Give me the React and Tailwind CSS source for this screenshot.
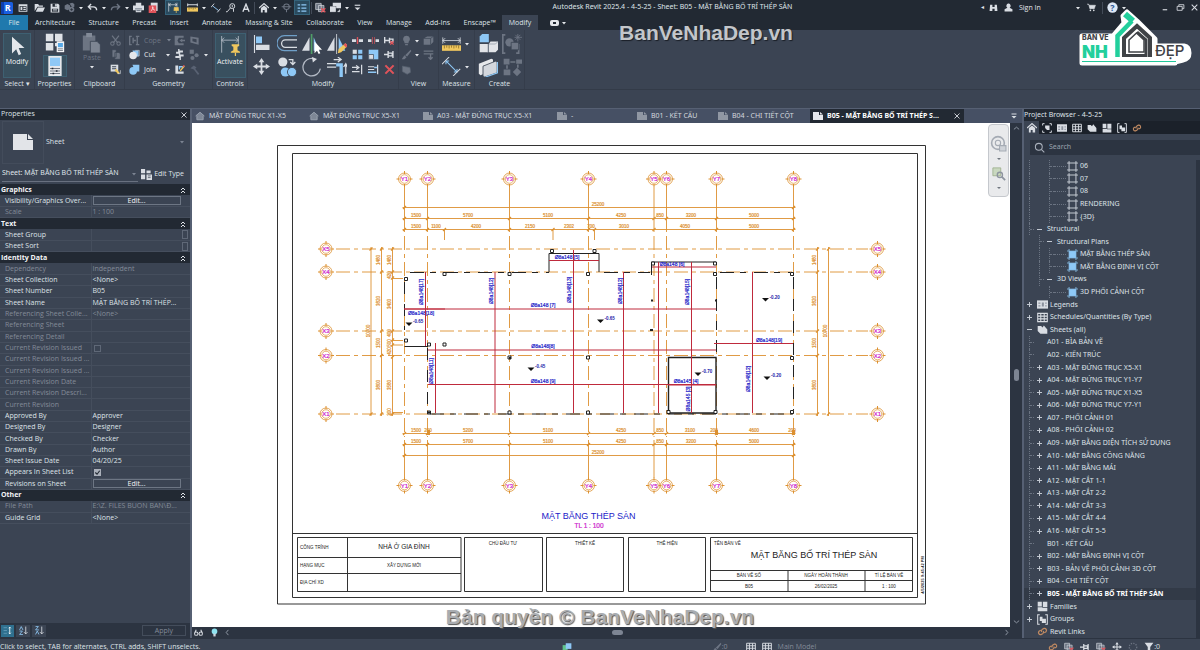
import React, { useState } from 'react';

const LIGHT = '#d9dde3';
const DIM = '#6d7583';
const BLUE = '#8ec8f6';
const GOLD = '#f0c75e';
const RED = '#e0535a';

/* ---------- icons ---------- */

const Svg = ({ size = 12, vb = 16, children }) => (
    <svg width={size} height={size} viewBox={`0 0 ${vb} ${vb}`} fill="none" className="shrink-0">
        {children}
    </svg>
);

const icons = {
    revit: <><rect width="16" height="16" rx="2" fill="#1a5fe0" /><path d="M0 0h4v16H0z" fill="#0d3fae" /><text x="9" y="12.5" fontSize="12" fontWeight="700" fill="#fff" textAnchor="middle" fontFamily="Open Sans">R</text></>,
    homeWin: <><path d="M1 2h14v12H1z" fill={LIGHT} /><path d="M2.500 5h11v7.500h-11z" fill="#222933" /><path d="M4 6h3v5H4zM8.500 6h4v2h-4zM8.500 9h4v2h-4z" fill={LIGHT} /></>,
    open: <><path d="M1 13V3h5l1.500 2H13v2H5z" fill={LIGHT} /><path d="M5.500 8H16l-3 6H2.500z" fill={LIGHT} /></>,
    save: <><path d="M1 1h12l2 2v12H1z" fill={LIGHT} /><path d="M4 1h7v5H4zM3 9h10v5H3z" fill="#222933" /><path d="M8.500 2h2v3h-2zM4.500 10.500h7M4.500 12.500h7" fill={LIGHT} stroke={LIGHT} /></>,
    sync: <><path d="M1 5l4-2 4 2v5l-4 2-4-2zM8 2l4-1 3 2v4l-3 1" fill={DIM} /><circle cx="11" cy="11" r="4" fill={DIM} /><path d="M9 11h4M11 9v4" stroke="#222933" /></>,
    undo: <path d="M2 7h7q5 0 5 5M6 3L2 7l4 4" stroke={LIGHT} strokeWidth="2" />,
    redo: <path d="M14 7H7q-5 0-5 5M10 3l4 4-4 4" stroke={DIM} strokeWidth="2" />,
    print: <><path d="M4 1h8v4H4zM0 5h16v7H0zM4 10h8v5H4z" fill={LIGHT} /><path d="M3 10h10M5 12.500h6" stroke="#3d4b5c" /></>,
    pdf: <><path d="M4 1h10v12H4z" fill={LIGHT} /><path d="M1 5h11v11H1z" fill={RED} /><path d="M4 13c3-2 4-5 3-6s-1 4 3 5" stroke="#fff" /></>,
    activate: <><path d="M1 1v13M13 1v6M1 4h12M4 2L1 4l3 2M10 2l3 2-3 2" stroke={LIGHT} /><path d="M9 8h6v4H9zM8 12h8M12 12v4" fill={GOLD} stroke={GOLD} /></>,
    measure: <><path d="M1 2v4M15 2v4M1 4h14" stroke={LIGHT} strokeWidth="1.500" /><path d="M0 8h16v6H0z" fill={GOLD} /><path d="M3 8v3M6 8v2M9 8v3M12 8v2" stroke="#6b5a2c" /></>,
    dim: <><path d="M3 5l9 7" stroke={BLUE} strokeWidth="1.500" /><path d="M0 7l5-6M10 15l5-6" stroke={LIGHT} strokeWidth="1.500" /></>,
    tag: <><circle cx="10" cy="5" r="4" stroke={LIGHT} strokeWidth="1.500" /><path d="M10 3v4M7 8l-5 6H0M12 9v5" stroke={LIGHT} strokeWidth="1.500" /></>,
    text: <path d="M3 14L8 2l5 12M5 10h6" stroke={LIGHT} strokeWidth="2.200" />,
    house: <><path d="M0 8l8-7 8 7" stroke={LIGHT} strokeWidth="2" /><path d="M3 8l5-4 5 4v7H9v-4H6v4H3z" fill={LIGHT} /></>,
    section: <><circle cx="8" cy="7" r="4" stroke={DIM} strokeWidth="1.500" /><path d="M1 7h14M8 11v4" stroke={DIM} strokeWidth="1.500" /></>,
    thin: <path d="M1 3h4M1 8h4M1 13h4M7 3h8M7 8h8M7 13h8" stroke={BLUE} strokeWidth="2" />,
    closeHidden: <><path d="M1 2h8v9H1zM5 5h8v9H5z" fill={DIM} stroke={LIGHT} /><path d="M9 9l6 6M15 9l-6 6" stroke={RED} strokeWidth="2" /></>,
    windows: <><path d="M4 1h12v8H9V6H4z" fill={LIGHT} /><path d="M0 7h8v7H0zM11 14h3v-3" fill={LIGHT} stroke={LIGHT} /></>,
    customise: <><path d="M3 4h10" stroke={LIGHT} strokeWidth="2" /><path d="M3 8h10l-5 5z" fill={LIGHT} /></>,
    binoc: <path d="M2 3h4v4h4V3h4l1 11h-5v-4H6v4H1z" fill={LIGHT} />,
    person: <path d="M8 1a3.500 4 0 0 1 2 7.500L15 11v4H1v-4l5-2.500A3.500 4 0 0 1 8 1z" fill={LIGHT} />,
    cart: <><path d="M0 2h3l2 8h8l2-6H4" fill={LIGHT} stroke={LIGHT} /><circle cx="6" cy="13" r="1.500" fill={LIGHT} /><circle cx="12" cy="13" r="1.500" fill={LIGHT} /></>,
    help: <><circle cx="8" cy="8" r="7.500" fill="#dfe8f5" /><text x="8" y="12.500" fontSize="13" fontWeight="700" textAnchor="middle" fill="#2a5794" fontFamily="Open Sans">?</text></>,
    min: <path d="M3 12h8" stroke={LIGHT} strokeWidth="2" />,
    restore: <path d="M5 6V3h9v7h-3M2 6h9v7H2z" stroke={LIGHT} strokeWidth="1.500" />,
    close: <path d="M3 3l10 10M13 3L3 13" stroke={LIGHT} strokeWidth="1.800" />,

    cut: <><path d="M3 1l8 10M13 1L5 11" stroke={DIM} strokeWidth="1.800" /><circle cx="3.500" cy="12.500" r="2.500" stroke={DIM} strokeWidth="1.500" /><circle cx="12.500" cy="12.500" r="2.500" stroke={DIM} strokeWidth="1.500" /></>,
    copyClip: <path d="M3 1h6v11H3zM7 5h6l2 2v8H7z" fill={DIM} stroke="#3b4453" />,
    match: <><path d="M1 1h11v10H1z" fill={LIGHT} /><path d="M3 4h6M3 7h6" stroke="#3b4453" strokeWidth="1.500" /><path d="M8 8l5 6" stroke={GOLD} strokeWidth="3" /><path d="M11 14h4v-5" stroke={LIGHT} /></>,
    cope: <path d="M1 2v12M0 2h4M0 14h4M6 4v8M6 8h4M12 2v12M10 2h5M10 14h5" stroke={DIM} strokeWidth="2" />,
    cutGeo: <><path d="M5 2h9v9H9z" fill={BLUE} /><circle cx="6" cy="9.500" r="5.500" fill="#e4e6ea" /><path d="M9 2h6v8h-3" stroke="#b9c0ca" /></>,
    joinGeo: <><path d="M5 1h10v10H9z" fill={BLUE} /><circle cx="6" cy="10" r="5.500" fill={BLUE} /></>,
    cutProfile: <path d="M1 1h13v3H7l-2 4 2 4h7v3H1zM8 8l4-3v2h4v2h-4v2z" fill={DIM} />,
    split: <path d="M2 2l12 2v10L2 11zM5 5v4l6 2V6z" fill={DIM} fillRule="evenodd" />,
    wall: <path d="M6 0v4H3v3h4v3H2v3h6v3h2v-5h4V8H9V5h4V2H8V0z" fill={LIGHT} />,
    unjoin: <><path d="M1 1h6v6H1z" fill={DIM} /><circle cx="11" cy="9" r="3" fill={DIM} /><circle cx="5" cy="13" r="3" fill={DIM} /></>,
    beam: <><path d="M2 2h4v12H2zM6 11h8v3H6z" fill={LIGHT} /><path d="M8 8V4h5" stroke={BLUE} strokeWidth="2" /><path d="M9 10l6-7" stroke={GOLD} strokeWidth="2" /><path d="M13 4l2-2" stroke={RED} strokeWidth="2" /></>,
    hammer: <path d="M2 6l5-4 4 3-2 2 6 7-2 2-6-8z" fill="#596273" />,

    splitEl: <><path d="M0 6h6v4H0zM10 6h6v4h-6z" fill={LIGHT} /><path d="M8 3v10" stroke={RED} strokeWidth="2" /></>,
    splitGap: <><path d="M0 6h5v4H0zM11 6h5v4h-5z" fill={LIGHT} /><path d="M6.500 3v10M9.500 3v10" stroke={RED} /></>,
    unpin: <><path d="M1 3v9M1 8h7M8 4v8M8 6h5v4H8" stroke={LIGHT} strokeWidth="2" /><path d="M9 9l5 5M14 9l-5 5" stroke={RED} strokeWidth="2" /></>,
    array: <><path d="M1 1h6v6H1z" fill={LIGHT} /><path d="M9 1h6v6H9zM1 9h6v6H1zM9 9h6v6H9z" fill={BLUE} /></>,
    scale: <><path d="M1 1h14v14H1z" fill={BLUE} /><path d="M1 8h7v7H1z" fill={LIGHT} stroke="#3b4453" /></>,
    pin: <path d="M0 8h6M6 3v10M6 6h6v4H6M13 3v10" stroke={LIGHT} strokeWidth="2" />,
    trimOne: <path d="M0 5h8M0 11h11M6 2l4 3-4 3M14 1v14" stroke={LIGHT} strokeWidth="1.800" />,
    trimMulti: <><path d="M0 4h9M0 8h9M14 1v14" stroke={LIGHT} strokeWidth="1.800" /><path d="M0 12h12M9 5h4" stroke={BLUE} strokeWidth="2" /></>,
    del: <path d="M2 2l12 12M14 2L2 14" stroke={RED} strokeWidth="3" />,

    bulb: <path d="M8 1a5 5 0 0 1 3 9v2H5v-2a5 5 0 0 1 3-9zM6 13h4v2H6z" fill={DIM} />,
    cube: <><path d="M1 5l5-3h9v8l-4 4H1z" fill={DIM} /><path d="M1 5h10v9M11 5l4-3" stroke="#3b4453" /></>,
    brush: <path d="M14 1l1 2-6 8-3-2zM5 9l3 3-3 3H1z" fill={DIM} />,
    lines: <path d="M1 3h14M1 7h14M11 8v7M8 12l3 3 3-3" stroke={DIM} strokeWidth="2" />,
    hide: <path d="M2 3l5 1 6 1 1 7-5 3-7-4z" fill={DIM} stroke="#56606f" />,
};

const big = {
    cursor: <path d="M6 1v20l5-5 3 7 3-1.500-3-7h7z" fill="#e4e7eb" />,
    type: <><path d="M1 1h9v9H1zM12 1h9v9h-9zM1 12h9v9H1zM12 12h9v4h-9z" fill="#dfe2e7" /><path d="M14 10h9v13h-9z" fill="#f3f4f6" /><path d="M15.500 12h6v5h-6z" fill="#58a8e6" /><path d="M15.500 19h6M15.500 21h6" stroke="#69707c" /></>,
    props: <><path d="M4 0h16v24H4z" fill="#e6e8eb" /><path d="M6 2h12v10H6z" fill={BLUE} /><path d="M6 15h12M6 18h12M6 21h12" stroke="#59616e" /><path d="M9 14v2M14 17v2M10 20v2" stroke="#222933" strokeWidth="2" /></>,
    paste: <><path d="M1 3h15v18H1z" fill={DIM} /><path d="M5 0h7v5H5z" fill="#828a97" /><path d="M10 10h8l4 4v10H10z" fill="#7d8592" stroke="#3b4453" /></>,
    activate: <><path d="M2 0v20M22 0v12M2 5h20M5 2L2 5l3 3M19 2l3 3-3 3" stroke="#b7bec9" /><path d="M14 10h9v2l-2 1v4l3 2v1H13v-1l3-2v-4l-2-1z" fill={GOLD} /><path d="M18.500 20v4" stroke={GOLD} strokeWidth="1.500" /></>,
    align: <><path d="M2 0v24" stroke={LIGHT} strokeWidth="1.500" /><path d="M4 2h8v9H4z" fill={BLUE} /><path d="M4 13h18v7H4z" fill={LIGHT} /></>,
    offset: <><path d="M24 2H9a9 9 0 0 0 0 18h15" stroke="#6f9fc8" strokeWidth="1.500" /><path d="M24 7H10a4.500 4.500 0 0 0 0 9h14" stroke={LIGHT} strokeWidth="1.500" /></>,
    mirrorPick: <><path d="M9 4v16H0z" fill={LIGHT} /><path d="M14 4l7 16h-7z" fill={BLUE} /><path d="M11.500 0v24" stroke="#4f9f68" strokeWidth="2" /><path d="M15 9v14l3-3 2 4 2-1-2-4h4z" fill="#fff" /></>,
    mirrorDraw: <><path d="M9 4v16H0z" fill={LIGHT} /><path d="M14 4l8 16h-8z" fill={BLUE} /><path d="M11.500 0v24" stroke={LIGHT} /><path d="M14 18l8-7 3 3-8 8-4 1z" fill={GOLD} /><path d="M21 12l3 3" stroke={RED} strokeWidth="3" /></>,
    move: <><path d="M12 3v18M3 12h18" stroke={LIGHT} strokeWidth="2.500" /><path d="M12 0l4 6H8zM12 24l4-6H8zM0 12l6-4v8zM24 12l-6-4v8z" fill={LIGHT} /></>,
    copy: <><circle cx="7" cy="6" r="5.500" fill={LIGHT} /><circle cx="10" cy="18" r="5.500" fill={BLUE} /><circle cx="18" cy="18" r="5.500" fill={BLUE} stroke="#3b4453" /><path d="M14 3h5v5M16 6l3 3 3-3" stroke={LIGHT} strokeWidth="1.500" /></>,
    rotate: <><path d="M14 2a10.500 10.500 0 1 0 8 12" stroke="#b4bbc6" strokeWidth="1.500" /><path d="M12 0l6 2.500-5 4z" fill={LIGHT} /></>,
    trim: <><path d="M0 8h11M0 12h11" stroke={LIGHT} strokeWidth="1.500" /><path d="M11 9.500h6V24" stroke={BLUE} strokeWidth="4" /><path d="M8 3h8M13 0l4 3-4 3M22.500 20V9M20 12l2.500-4 2 4" stroke={LIGHT} strokeWidth="1.500" /></>,
    ruler: <><path d="M1 3v8M23 3v8M1 7h22M4 4L1 7l3 3M20 4l3 3-3 3" stroke={LIGHT} /><path d="M0 13h24v7H0z" fill={GOLD} /><path d="M3 13v4M6 13v3M9 13v4M12 13v3M15 13v4M18 13v3M21 13v4" stroke="#8a6c25" /></>,
    dimBig: <><path d="M5 5l14 14M5 9V5h4M19 15v4h-4" stroke={BLUE} strokeWidth="1.300" /><path d="M0 9l9-9M14 24l9-9" stroke={LIGHT} strokeWidth="1.300" /></>,
    similar: <><path d="M2 3l3-3h8v10H2z" fill={BLUE} /><path d="M2 12h10v10H2zM13 12l2-3h9v10l-3 3h-8z" fill="#e2e4e8" /><path d="M12 12v10M13 12h8l3-3" stroke="#9aa2ae" /></>,
    assembly: <><path d="M4 1H1v22h3M20 12v11h-3" stroke={DIM} strokeWidth="2" /><circle cx="9" cy="10" r="5" fill={DIM} /><path d="M11 10h9v9h-9z" fill={DIM} stroke="#3b4453" /><path d="M19 0v9M15 4h9M16 1l6 6M22 1l-6 6" stroke={DIM} /></>,
    parts: <><path d="M1 8l15-6 2 1v13L3 22l-2-2z" fill="#e6e8eb" /><path d="M6 11l15-6 2 1v13L8 24l-2-1z" fill="#d3d7dd" stroke="#3b4453" /><path d="M23.500 6v13L9 24" stroke={BLUE} strokeWidth="1.500" /></>,
    group: <><path d="M2 2h7v7H2zM17 3h7v5h-7zM2 15h8v7H2zM18 13l5 5-5 5-5-5z" fill={DIM} /><path d="M10 6h6M6 10v4M19 9v4" stroke={DIM} strokeWidth="2" /></>,
};

const Caret = ({ dim }) => (
    <svg width="8" height="6" viewBox="0 0 8 6" className="shrink-0">
        <path d="M2 2h4L4 4.500z" fill={dim ? '#7c8492' : '#e5e7eb'} />
    </svg>
);

const Tool = ({ icon, label, on, wide = 'w-[15px]', size = 11 }) => (
    <button aria-label={label} className={`${wide} h-[15px] shrink-0 flex items-center justify-center ${on ? 'bg-[#2a4a5e] border border-[#35637b]' : ''}`}>
        <Svg size={size}>{icons[icon]}</Svg>
    </button>
);

const BigTool = ({ icon, label, size = 20 }) => (
    <button aria-label={label} className="flex items-center justify-center">
        <Svg size={size} vb={24}>{big[icon]}</Svg>
    </button>
);

const SmallTool = ({ icon, label }) => (
    <button aria-label={label} className="flex items-center justify-center">
        <Svg size={11}>{icons[icon]}</Svg>
    </button>
);

/* ---------- title bar and ribbon ---------- */

const DropArrow = ({ label }) => (
    <button aria-label={`${label} options`} className="w-2 h-[15px] shrink-0 flex items-center justify-center"><Caret /></button>
);

const TitleBar = () => (
    <header className="h-[15px] flex items-center bg-[#222933] shrink-0">
        <Tool icon="revit" label="Revit home" wide="w-[14px]" size={12} />
        <Tool icon="homeWin" label="Home" wide="w-[18px]" size={10} />
        <Tool icon="open" label="Open" />
        <Tool icon="save" label="Save" size={10} />
        <Tool icon="sync" label="Synchronize" />
        <DropArrow label="Synchronize" />
        <Tool icon="undo" label="Undo" />
        <DropArrow label="Undo" />
        <Tool icon="redo" label="Redo" />
        <DropArrow label="Redo" />
        <Tool icon="print" label="Print" />
        <Tool icon="pdf" label="Export PDF" />
        <span className="w-1" />
        <Tool icon="activate" label="Activate controls" wide="w-4" on />
        <span className="w-1" />
        <Tool icon="measure" label="Measure" />
        <DropArrow label="Measure" />
        <Tool icon="dim" label="Aligned dimension" size={10} />
        <Tool icon="tag" label="Tag by category" size={10} />
        <Tool icon="text" label="Text" size={10} />
        <span className="w-px h-3 mx-px bg-[#434b58]" />
        <Tool icon="house" label="Default 3D view" size={10} />
        <DropArrow label="3D view" />
        <Tool icon="section" label="Section" />
        <Tool icon="thin" label="Thin lines" wide="w-4" on size={10} />
        <span className="w-px h-3 mx-px bg-[#434b58]" />
        <Tool icon="closeHidden" label="Close inactive views" />
        <Tool icon="windows" label="Switch windows" />
        <DropArrow label="Switch windows" />
        <Tool icon="customise" label="Customize toolbar" wide="w-[12px]" size={9} />
        <h1 className="flex-1 pb-[2px] pl-1 text-center text-[7px] leading-[12px] text-[#dfe3e8] whitespace-nowrap [font-family:'Noto_Sans',sans-serif]">
            Autodesk Revit 2025.4 - 4-5-25 - Sheet: B05 - MẶT BẰNG BỐ TRÍ THÉP SÀN
        </h1>
        <button aria-label="Collapse search" className="w-2 text-[6px]">◂</button>
        <Tool icon="binoc" label="Search help" size={9} />
        <Tool icon="person" label="Account" size={9} />
        <button className="w-[58px] pt-px pl-[3px] text-left text-[7px] text-gray-200">Sign In</button>
        <DropArrow label="Account" />
        <Tool icon="cart" label="App store" wide="w-[18px]" size={9} />
        <span className="w-px h-3 mx-[2px] bg-[#434b58]" />
        <Tool icon="help" label="Help" />
        <DropArrow label="Help" />
        <span className="w-[30px]" />
        <Tool icon="min" label="Minimize" size={9} />
        <Tool icon="restore" label="Restore" size={9} />
        <Tool icon="close" label="Close" wide="w-[12px]" size={9} />
    </header>
);

const tabs = ['Architecture', 'Structure', 'Precast', 'Insert', 'Annotate', 'Massing & Site', 'Collaborate', 'View', 'Manage', 'Add-Ins', 'Enscape™'];

const RibbonTabs = () => (
    <nav className="h-[15px] flex bg-[#222933] text-[7px] text-[#dfe3e8] shrink-0">
        <button className="w-7 pt-[2px] mr-px bg-[#2079ad]">File</button>
        <div className="w-[473px] shrink-0 flex justify-between">
            {tabs.map((t) => (
                <button key={t} className="px-[6px] pt-[2px] whitespace-nowrap">{t}</button>
            ))}
        </div>
        <button className="w-9 pt-[2px] bg-[#3b4453]">Modify</button>
        <button aria-label="Ribbon display" className="ml-3 flex items-center">
            <svg width="10" height="6" viewBox="0 0 10 6"><rect width="9" height="6" rx="2" fill="#e5e7eb" /><path d="M3 2h3v2H3z" fill="#222933" /></svg>
            <Caret />
        </button>
    </nav>
);

const Panel = ({ title, width, children }) => (
    <section className={`${width} shrink-0 flex flex-col border-r border-[#353d4b]`}>
        <div className="flex-1 flex justify-center pt-[3px]">{children}</div>
        <h2 className="h-[11px] text-center text-[7px] leading-[11px] text-[#dfe3e8] whitespace-nowrap">{title}</h2>
    </section>
);

const LabelTool = ({ icon, label, dim }) => (
    <button className={`flex items-center gap-1 pl-[2px] text-[7px] ${dim ? 'text-[#6d7583]' : 'text-gray-200'}`}>
        <Svg size={11}>{icons[icon]}</Svg>
        <span className="w-5 pt-px text-left">{label}</span>
        <Caret dim={dim} />
    </button>
);

const Ribbon = () => (
    <div className="relative h-[60px] flex bg-[#3b4453] border-b border-[#333b48] shrink-0">
        <Panel title="Select ▾" width="w-[35px]">
            <button className="w-7 h-[45px] flex flex-col items-center pt-[2px] gap-[1px] bg-[#39505f] border border-[#3e6072] text-[7px] text-gray-100">
                <Svg size={20} vb={24}>{big.cursor}</Svg>
                Modify
            </button>
        </Panel>
        <Panel title="Properties" width="w-10">
            <div className="flex flex-col items-center gap-[2px]">
                <BigTool icon="type" label="Type properties" />
                <button aria-label="Properties" className="w-6 h-[22px] flex items-center justify-center bg-[#39505f] border border-[#3e6072]">
                    <Svg size={20} vb={24}>{big.props}</Svg>
                </button>
            </div>
        </Panel>
        <Panel title="Clipboard" width="w-[50px]">
            <div className="flex gap-1 pl-1">
                <button className="w-6 flex flex-col items-center text-[7px] text-[#6d7583]">
                    <Svg size={20} vb={24}>{big.paste}</Svg>
                    Paste
                    <Caret />
                </button>
                <div className="w-[15px] h-[44px] grid grid-rows-3">
                    <SmallTool icon="cut" label="Cut to clipboard" />
                    <SmallTool icon="copyClip" label="Copy to clipboard" />
                    <SmallTool icon="match" label="Match type" />
                </div>
            </div>
        </Panel>
        <Panel title="Geometry" width="w-[88px]">
            <div className="h-[44px] grid grid-cols-[45px_15px_15px_8px] grid-rows-3">
                <LabelTool icon="cope" label="Cope" dim />
                <SmallTool icon="cutProfile" label="Cut profile" />
                <SmallTool icon="split" label="Split face" />
                <span />
                <LabelTool icon="cutGeo" label="Cut" />
                <SmallTool icon="wall" label="Wall joins" />
                <SmallTool icon="unjoin" label="Unjoin" />
                <DropArrow label="Unjoin" />
                <LabelTool icon="joinGeo" label="Join" />
                <SmallTool icon="beam" label="Beam joins" />
                <SmallTool icon="hammer" label="Demolish" />
            </div>
        </Panel>
        <Panel title="Controls" width="w-[35px]">
            <button className="w-[31px] h-[45px] flex flex-col items-center pt-[2px] gap-[1px] bg-[#39505f] border border-[#3e6072] text-[7px] text-gray-100">
                <Svg size={20} vb={24}>{big.activate}</Svg>
                Activate
            </button>
        </Panel>
        <Panel title="Modify" width="w-[151px]">
            <div className="h-[45px] grid grid-cols-[25px_25px_25px_25px] grid-rows-2">
                <BigTool icon="align" label="Align" size={18} />
                <BigTool icon="offset" label="Offset" />
                <BigTool icon="mirrorPick" label="Mirror - pick axis" />
                <BigTool icon="mirrorDraw" label="Mirror - draw axis" />
                <BigTool icon="move" label="Move" size={17} />
                <BigTool icon="copy" label="Copy" />
                <BigTool icon="rotate" label="Rotate" />
                <BigTool icon="trim" label="Trim to corner" />
            </div>
            <div className="h-[44px] grid grid-cols-[16px_16px_16px] grid-rows-3">
                <SmallTool icon="splitEl" label="Split element" />
                <SmallTool icon="splitGap" label="Split with gap" />
                <SmallTool icon="unpin" label="Unpin" />
                <SmallTool icon="array" label="Array" />
                <SmallTool icon="scale" label="Scale" />
                <SmallTool icon="pin" label="Pin" />
                <SmallTool icon="trimOne" label="Trim single element" />
                <SmallTool icon="trimMulti" label="Trim multiple elements" />
                <SmallTool icon="del" label="Delete" />
            </div>
        </Panel>
        <Panel title="View" width="w-10">
            <div className="h-[44px] grid grid-cols-[12px_8px_16px] grid-rows-3">
                <SmallTool icon="bulb" label="Hide in view" />
                <DropArrow label="Hide in view" />
                <SmallTool icon="cube" label="Displace elements" />
                <SmallTool icon="brush" label="Override graphics" />
                <DropArrow label="Override graphics" />
                <SmallTool icon="lines" label="Linework" />
                <SmallTool icon="hide" label="Selection box" />
            </div>
        </Panel>
        <Panel title="Measure" width="w-9">
            <div className="h-[45px] grid grid-cols-[22px_10px] grid-rows-2 items-center">
                <BigTool icon="ruler" label="Measure" size={19} />
                <DropArrow label="Measure" />
                <BigTool icon="dimBig" label="Dimension" size={19} />
                <DropArrow label="Dimension" />
            </div>
        </Panel>
        <Panel title="Create" width="w-[50px]">
            <div className="h-[45px] grid grid-cols-[24px_24px] grid-rows-2">
                <BigTool icon="similar" label="Create similar" />
                <BigTool icon="assembly" label="Create assembly" />
                <BigTool icon="parts" label="Create parts" />
                <BigTool icon="group" label="Create group" />
            </div>
        </Panel>
    </div>
);

/* ---------- properties palette ---------- */

const properties = [
    { group: 'Graphics' },
    { name: 'Visibility/Graphics Over...', kind: 'edit' },
    { name: 'Scale', value: '1 : 100', dim: true },
    { group: 'Text' },
    { name: 'Sheet Group', kind: 'pick' },
    { name: 'Sheet Sort', kind: 'pick' },
    { group: 'Identity Data' },
    { name: 'Dependency', value: 'Independent', dim: true },
    { name: 'Sheet Collection', value: '<None>' },
    { name: 'Sheet Number', value: 'B05' },
    { name: 'Sheet Name', value: 'MẶT BẰNG BỐ TRÍ THÉP...' },
    { name: 'Referencing Sheet Colle...', value: '<None>', dim: true },
    { name: 'Referencing Sheet', dim: true },
    { name: 'Referencing Detail', dim: true },
    { name: 'Current Revision Issued', kind: 'check', dim: true },
    { name: 'Current Revision Issued ...', dim: true },
    { name: 'Current Revision Issued ...', dim: true },
    { name: 'Current Revision Date', dim: true },
    { name: 'Current Revision Descri...', dim: true },
    { name: 'Current Revision', dim: true },
    { name: 'Approved By', value: 'Approver' },
    { name: 'Designed By', value: 'Designer' },
    { name: 'Checked By', value: 'Checker' },
    { name: 'Drawn By', value: 'Author' },
    { name: 'Sheet Issue Date', value: '04/20/25' },
    { name: 'Appears In Sheet List', kind: 'check', checked: true },
    { name: 'Revisions on Sheet', kind: 'edit' },
    { group: 'Other' },
    { name: 'File Path', value: 'E:\\Z. FILES BUON BAN\\Đ...', dim: true },
    { name: 'Guide Grid', value: '<None>' },
];

const Check = ({ label, dim, checked }) => {
    const [on, setOn] = useState(!!checked);
    return (
        <span className="relative flex w-[7px] h-[7px] ml-px">
            <input
                type="checkbox"
                aria-label={label}
                checked={on}
                disabled={dim}
                onChange={() => setOn(!on)}
                className={`appearance-none w-[7px] h-[7px] border ${on ? 'bg-[#aab0ba] border-[#aab0ba]' : 'border-[#5f6877]'}`}
            />
            {on && (
                <svg viewBox="0 0 8 8" className="absolute inset-0 pointer-events-none">
                    <path d="M1.500 4l2 2 3-4" fill="none" stroke="#222933" strokeWidth="1.300" />
                </svg>
            )}
        </span>
    );
};

const PropertyValue = ({ row }) => {
    if (row.kind === 'edit') {
        return <button className="block w-[88px] h-[9px] border border-[#6d7684] text-[7px] leading-[7px] text-gray-100">Edit...</button>;
    }
    if (row.kind === 'check') return <Check label={row.name} dim={row.dim} checked={row.checked} />;
    if (row.kind === 'pick') return <button aria-label={`Browse ${row.name}`} className="block w-[6px] h-[9px] ml-auto border border-[#5f6877]" />;
    return row.value || '';
};

const Chevrons = () => (
    <svg width="6" height="8" viewBox="0 0 6 8" className="ml-auto">
        <path d="M1 4l2-2 2 2M1 7l2-2 2 2" fill="none" stroke="#dfe3e8" />
    </svg>
);

const PropertiesPalette = () => (
    <aside className="w-[190px] shrink-0 flex flex-col bg-[#3b4453] text-[7px] text-[#dfe3e8]">
        <div className="h-[11px] flex items-center justify-between pl-px pr-[2px] bg-[#222933]">
            <h2>Properties</h2>
            <button aria-label="Close properties"><Svg size={8}>{icons.close}</Svg></button>
        </div>
        <button className="h-[44px] flex items-center pr-1">
            <span className="w-[42px] h-[43px] ml-[2px] mr-[2px] flex items-center justify-center border border-[#434c5b]">
                <svg width="20" height="16" viewBox="0 0 20 16"><path d="M0 0h14v6h6v10H0z" fill="#e2e4e8" /><path d="M15 0l5 5h-5z" fill="#e2e4e8" /></svg>
            </span>
            <span className="flex-1 text-left">Sheet</span>
            <Caret dim />
        </button>
        <div className="h-5 flex items-center pl-[2px] pr-[6px]">
            <div className="relative w-[136px] flex items-center border-b border-[#697180]">
                <select aria-label="Element filter" className="w-full h-[14px] appearance-none bg-transparent text-[7px] outline-none [font-family:'Noto_Sans',sans-serif]">
                    <option>Sheet: MẶT BẰNG BỐ TRÍ THÉP SÀN</option>
                </select>
                <span className="absolute right-0 pointer-events-none"><Caret dim /></span>
            </div>
            <button className="flex-1 flex items-center justify-end gap-[2px]">
                <Svg size={11}><path d="M0 0h6v6H0zM8 2h6v4H8zM0 8h6v7H0zM8 8h8v8H8z" fill={LIGHT} /><path d="M10 10h4M10 12.500h4" stroke="#3b4453" /></Svg>
                Edit Type
            </button>
        </div>
        <table className="w-full h-[340px] table-fixed border-collapse">
            <colgroup>
                <col className="w-[91px]" />
                <col />
            </colgroup>
            <tbody>
                {properties.map((row, i) =>
                    row.group ? (
                        <tr key={i} className="h-[11px] bg-[#222933]">
                            <th scope="colgroup" className="p-0 pl-px text-left leading-[10px] font-bold text-gray-100">{row.group}</th>
                            <td className="p-0 pr-1"><Chevrons /></td>
                        </tr>
                    ) : (
                        <tr key={i} className={`h-[11px] border-b border-[#454e5d] ${row.dim ? 'text-[#838b98]' : ''}`}>
                            <th scope="row" className="p-0 pl-[5px] text-left leading-[10px] font-normal whitespace-nowrap overflow-hidden border-r border-[#454e5d]">{row.name}</th>
                            <td className="p-0 pl-px pr-[2px] leading-[10px] whitespace-nowrap overflow-hidden"><PropertyValue row={row} /></td>
                        </tr>
                    )
                )}
            </tbody>
        </table>
        <div className="flex-1" />
        <div className="h-[15px] flex items-center gap-[2px] pl-px pr-1 bg-[#2c3441]">
            <button aria-label="Group properties" className="w-[13px] h-3 flex items-center justify-center bg-[#2f708f]"><Svg size={9}><path d="M1 3h6M1 8h6M1 13h6" stroke="#7fb3cf" /><path d="M12 2v12M10 4l2-2 2 2M10 12l2 2 2-2" stroke="#fff" strokeWidth="1.500" /></Svg></button>
            <button aria-label="Sort A to Z" className="w-[14px] h-3 flex items-center justify-center bg-[#3b4453]"><Svg size={9}><path d="M1 7l3-6 3 6M1 9h5l-5 6h6" stroke={BLUE} strokeWidth="1.500" /><path d="M12 1v13M9 11l3 3 3-3" stroke={LIGHT} strokeWidth="1.500" /></Svg></button>
            <button aria-label="Sort Z to A" className="w-[14px] h-3 flex items-center justify-center bg-[#3b4453]"><Svg size={9}><path d="M1 1h5l-5 6h6M1 15l3-6 3 6" stroke={BLUE} strokeWidth="1.500" /><path d="M12 1v13M9 11l3 3 3-3" stroke={LIGHT} strokeWidth="1.500" /></Svg></button>
            <button className="ml-auto w-11 h-[11px] border border-[#444d5b] text-[7px] leading-[9px] text-[#838b98]">Apply</button>
        </div>
    </aside>
);

/* ---------- sheet drawing ---------- */

const OR = '#dc9030';
const gridY = [['Y1', 404.5], ['Y2', 427.5], ['Y3', 509.5], ['Y4', 588.5], ['Y5', 654], ['Y6', 666.5], ['Y7', 716.5], ['Y8', 793.5]];
const gridX = [['X5', 249], ['X4', 272], ['X3', 331], ['X2', 355.5], ['X1', 414]];

const Bubble = ({ x, y, name }) => (
    <g>
        <circle cx={x} cy={y} r="6" fill="#fff" stroke={OR} strokeWidth="0.800" />
        <circle cx={x} cy={y} r="4.300" stroke={OR} strokeWidth="0.700" fill="none" />
        <path d={`M${x - 8} ${y}h3M${x + 5} ${y}h3M${x} ${y - 8}v3M${x} ${y + 5}v3`} stroke={OR} />
        <text x={x} y={y + 2} fontSize="6" fill="#cc22cc" stroke="#cc22cc" strokeWidth="0.200" textAnchor="middle">{name}</text>
    </g>
);

const DimRow = ({ y, ticks, labels }) => (
    <g stroke={OR} strokeWidth="0.900">
        <path d={`M${ticks[0] - 2} ${y}H${ticks[ticks.length - 1] + 2}`} />
        {ticks.map((x) => <path key={x} d={`M${x - 1.5} ${y + 1.5}l3-3`} strokeWidth="1.200" />)}
        {labels.map(([t, x]) => (
            <text key={x} x={x} y={y - 1.5} fontSize="4.500" textAnchor="middle" fill={OR} strokeWidth="0.200">{t}</text>
        ))}
    </g>
);

const DimCol = ({ x, ticks, labels }) => (
    <g stroke={OR} strokeWidth="0.900">
        <path d={`M${x} 247V416`} />
        {ticks.map((y) => <path key={y} d={`M${x - 1.5} ${y + 1.5}l3-3`} strokeWidth="1.200" />)}
        {labels.map(([t, y]) => (
            <text key={y} transform={`translate(${x - 1.5} ${y}) rotate(-90)`} fontSize="4.500" textAnchor="middle" fill={OR} strokeWidth="0.200">{t}</text>
        ))}
    </g>
);

const mainX = gridY.map((g) => g[1]);
const mainY = gridX.map((g) => g[1]);
const bayLabels = [['1500', 416], ['5700', 468], ['5100', 548], ['4250', 621], ['850', 660], ['3200', 691], ['5000', 754]];
const storeyLabels = [['1480', 260], ['3820', 301], ['1500', 343], ['3800', 385]];

const rebar = [
    ['M404 309H716', 'Ø8a148 [7]', 543, 307],
    ['M428 350H716', 'Ø8a148[8]', 543, 348],
    ['M428 384.500H716', 'Ø8a148 [9]', 543, 382.5],
    ['M549 260.500H599', 'Ø8a148 [5]', 567, 259],
    ['M652 267H716', 'Ø8a148 [6]', 672, 266],
    ['M714 343.500H793', 'Ø8a148[19]', 769, 341.5],
    ['M404 309H445', 'Ø8a148[18]', 421, 315],
    ['M668 385H716', 'Ø8a145 [4]', 686, 383],
    ['M425.500 272V346', 'Ø8a148[17]', 423, 292, 1],
    ['M435.500 343V413', 'Ø8a148[11]', 433, 371, 1],
    ['M495 272V413', 'Ø8a148[12]', 493, 291, 1],
    ['M573.500 250V413', 'Ø8a148[13]', 571, 290, 1],
    ['M623.500 272V413', 'Ø8a148[12]', 622, 291, 1],
    ['M658.500 262V413', '', 0, 0],
    ['M691.500 262V413', 'Ø8a148[15]', 689, 292, 1],
    ['M752.500 272V413', 'Ø8a148[12]', 750, 379, 1],
    ['', 'Ø8a145 [3]', 690, 399, 1],
];

const columns = [
    [406, 279], [444.5, 274], [509.5, 274], [588, 274], [552, 251], [594.5, 251], [406, 340.5], [429, 344.5], [444.5, 344.5],
    [509.5, 357.5], [588, 357.5], [429, 412.5], [509.5, 412.5], [588, 412.5], [715, 263.5], [715, 274], [792, 274], [792, 358],
    [668.5, 412], [715.5, 412], [792, 412], [653, 263.5],
];

const levels = [[409, 324, '-0.65'], [600.5, 321, '-0.65'], [531, 369, '-0.45'], [698, 374, '-0.70'], [765.5, 299.5, '-0.20'], [767, 378, '-0.20']];

const SheetDrawing = () => (
    <svg viewBox="193 123 816 504" className="block w-full h-full" fontFamily="Liberation Sans, sans-serif" role="img" aria-label="Sheet B05">
        <g fill="none" stroke="#333">
            <path d="M277.500 145.500H925.500V604H277.500z" />
            <path d="M292.500 153.500H917.500V597.500H292.500zM292.500 533.500H917.500" />
            <path d="M297.500 537.500H461V591.500H297.500zM347.500 537.500V591.500M297.500 557.500H461M297.500 573.500H461" />
            <path d="M464.500 537.500H542.500V591.500H464.500zM546.500 537.500H623.500V591.500H546.500zM628.500 537.500H705.500V591.500H628.500z" />
            <path d="M710.500 537.500H912.500V591.500H710.500zM710.500 570.500H912.500M710.500 580.500H912.500M788 570.500V591.500M865 570.500V591.500" />
        </g>

        {/* grid lines */}
        <g stroke={OR} strokeWidth="0.900" fill="none">
            {gridY.map(([n, x]) => (
                <g key={n}>
                    <path d={`M${x} 187V232M${x} 440V478`} />
                    <path d={`M${x} 236V437`} strokeDasharray="14 4 4 4" />
                </g>
            ))}
            {gridX.map(([n, y]) => <path key={n} d={`M336 ${y}H868`} strokeDasharray="14 4 4 4" />)}
            <path d="M444.500 229V240M553 229V240M594.500 229V240M392 278.500H403M392 340.500H403M392 345H403M392 412.500H403" />
        </g>
        {gridY.map(([n, x]) => <g key={n}><Bubble x={x} y={179} name={n} /><Bubble x={x} y={485.5} name={n} /></g>)}
        {gridX.map(([n, y]) => <g key={n}><Bubble x={326} y={y} name={n} /><Bubble x={877.5} y={y} name={n} /></g>)}

        <DimRow y={207.5} ticks={[404.5, 793.5]} labels={[['25200', 598]]} />
        <DimRow y={218.5} ticks={mainX} labels={bayLabels} />
        <DimRow y={229.5} ticks={[404.5, 427.5, 444.5, 509.5, 553, 588.5, 594.5, 654, 716.5, 793.5]} labels={[['1500', 416], ['1100', 436], ['4200', 476], ['2150', 530], ['2302', 569], ['700', 591], ['3010', 624], ['4050', 685], ['5000', 754]]} />
        <DimRow y={433.5} ticks={mainX} labels={[['1500', 416], ['200', 428], ['5200', 468], ['5100', 548], ['4250', 621], ['850', 660], ['3100', 690], ['200', 714], ['4600', 754], ['200', 792]]} />
        <DimRow y={444.5} ticks={mainX} labels={bayLabels} />
        <DimRow y={455.5} ticks={[404.5, 793.5]} labels={[['25200', 598]]} />
        <DimCol x={371} ticks={[249, 414]} labels={[['10700', 331]]} />
        <DimCol x={381.5} ticks={mainY} labels={storeyLabels} />
        <DimCol x={392.5} ticks={[249, 272, 278, 331, 340, 345, 357, 414]} labels={[['1480', 260], ['420', 275], ['3400', 304], ['400', 333], ['500', 343], ['420', 351], ['3580', 385], ['200', 412]]} />
        <DimCol x={817.5} ticks={mainY} labels={storeyLabels} />
        <DimCol x={828.5} ticks={[249, 414]} labels={[['10700', 331]]} />
        <path d="M427 430h3v5h-3zM715 430h3v5h-3zM792 430h3v5h-3z" fill={OR} />

        {/* walls and columns */}
        <g stroke="#222" fill="none">
            <path d="M410 272.500H549M604 272.500H650M720 272.500H790M430 414H793" strokeDasharray="14 6 6 8" />
            <path d="M404.500 282V330M427.500 348V410M716.500 277V330M716.500 340V354M793.500 277V410" strokeDasharray="12 10" />
            <path d="M549 272V253.500H599V272M404.500 346.500H428M651.500 275V262H716" />
            <path d="M668.500 357.500H716V413H668.500z" strokeWidth="1.400" />
            {columns.map(([x, y]) => <path key={`${x}-${y}`} d={`M${x - 1.5} ${y - 1.5}h3v3h-3z`} fill="#fff" />)}
            <path d="M651 300.500h2M715 300.500h2M650 330h3M428 412.500h3M509 358h2" strokeWidth="2" />
        </g>

        {/* reinforcement */}
        {rebar.map(([d, label, x, y, vertical], i) => (
            <g key={i}>
                {d && <path d={d} stroke="#bf2a3c" strokeWidth="1" fill="none" />}
                <text
                    transform={vertical ? `translate(${x} ${y}) rotate(-90)` : `translate(${x} ${y})`}
                    fontSize="5"
                    textAnchor="middle"
                    fill="#2222c8"
                    stroke="#2222c8"
                    strokeWidth="0.200"
                >
                    {label}
                </text>
            </g>
        ))}
        {levels.map(([x, y, t]) => (
            <g key={`${x}-${y}`}>
                <path d={`M${x - 3.5} ${y - 1.5}h7l-3.500 3.500z`} fill="#111" />
                <text x={x + 4} y={y - 1} fontSize="4.500" fontWeight="700" fill="#2222a8">{t}</text>
            </g>
        ))}

        <g textAnchor="middle" fill="#222">
            <text x="588.500" y="518.500" fontSize="9" fill="#2222c8">MẶT BẰNG THÉP SÀN</text>
            <text x="589" y="528" fontSize="6.500" fill="#cc22cc" stroke="#cc22cc" strokeWidth="0.200">TL  1 : 100</text>
            <text x="404" y="549" fontSize="6.500">NHÀ Ở GIA ĐÌNH</text>
            <text x="404" y="567" fontSize="4.500">XÂY DỰNG MỚI</text>
            <text x="503" y="545" fontSize="4.500">CHỦ ĐẦU TƯ</text>
            <text x="585" y="545" fontSize="4.500">THIẾT KẾ</text>
            <text x="667" y="545" fontSize="4.500">THỂ HIỆN</text>
            <text x="814" y="558" fontSize="9">MẶT BẰNG BỐ TRÍ THÉP SÀN</text>
            <text x="749" y="577" fontSize="4.500">BẢN VẼ SỐ</text>
            <text x="826" y="577" fontSize="4.500">NGÀY HOÀN THÀNH</text>
            <text x="889" y="577" fontSize="4.500">TỈ LỆ BẢN VẼ</text>
            <text x="749" y="588" fontSize="4.500">B05</text>
            <text x="826" y="588" fontSize="4.500">26/02/2025</text>
            <text x="889" y="588" fontSize="4.500">1 : 100</text>
            <text transform="translate(924 575) rotate(-90)" fontSize="4" fontWeight="700">4/5/2025 9:45:42 PM</text>
        </g>
        <g fill="#222" fontSize="4.500">
            <text x="300" y="549">CÔNG TRÌNH</text>
            <text x="300" y="567">HẠNG MỤC</text>
            <text x="300" y="584">ĐỊA CHỈ XD</text>
            <text x="714" y="545">TÊN BẢN VẼ</text>
        </g>
    </svg>
);

/* ---------- view area ---------- */

const viewTabs = [
    { name: 'MẶT ĐỨNG TRỤC X1-X5', home: true, width: 'w-[114px]' },
    { name: 'MẶT ĐỨNG TRỤC X5-X1', home: true, width: 'w-[114px]' },
    { name: 'A03 - MẶT ĐỨNG TRỤC X5-X1', width: 'w-[134px]' },
    { name: '-', width: 'w-20' },
    { name: 'B01 - KẾT CẤU', width: 'w-[81px]' },
    { name: 'B04 - CHI TIẾT CỘT', width: 'w-[95px]' },
];

const SheetIcon = ({ color }) => (
    <svg width="10" height="8" viewBox="0 0 10 8" className="shrink-0"><path d="M0 0h6v3h4v5H0z" fill={color} /><path d="M7 0l3 2.500H7z" fill={color} /></svg>
);

const ViewTabs = () => (
    <div className="h-[14px] flex shrink-0 bg-[#465064] text-[7px] text-[#d3d8df] [font-family:'Noto_Sans',sans-serif]">
        {viewTabs.map((t) => (
            <button key={t.name} className={`${t.width} shrink-0 flex items-center gap-1 pl-[3px] whitespace-nowrap`}>
                {t.home ? <Svg size={10}><path d="M1 8l7-6 7 6M3 8v6h10V8" fill="#7e8796" stroke="#9aa2b0" strokeWidth="1.500" /></Svg> : <SheetIcon color="#9097a3" />}
                {t.name}
            </button>
        ))}
        <div className="w-[154px] flex items-center gap-1 px-[3px] bg-[#222933] font-bold text-white">
            <SheetIcon color="#e5e7eb" />
            <button className="flex-1 text-left whitespace-nowrap">B05 - MẶT BẰNG BỐ TRÍ THÉP S...</button>
            <button aria-label="Close view"><Svg size={8}>{icons.close}</Svg></button>
        </div>
        <button aria-label="All views" className="ml-auto mr-1"><Svg size={8}>{icons.customise}</Svg></button>
    </div>
);

const NavCaret = ({ label }) => (
    <button aria-label={label}><svg width="6" height="4" viewBox="0 0 6 4"><path d="M1 1h4L3 3z" fill="#70767f" /></svg></button>
);

const NavBar = () => (
    <div className="absolute top-px right-px w-[21px] h-[73px] flex flex-col items-center justify-between pt-[10px] pb-[6px] rounded-sm bg-[#e9eaec] border border-[#c5c8cd]">
        <button aria-label="Steering wheel">
            <Svg size={17}><circle cx="7.500" cy="7.500" r="6" stroke="#a5abb4" strokeWidth="1.500" /><circle cx="7.500" cy="7.500" r="2.500" stroke="#a5abb4" /><path d="M9 10h6v5H9z" fill="#cfd3d9" stroke="#a5abb4" /></Svg>
        </button>
        <NavCaret label="Wheel options" />
        <button aria-label="Zoom region">
            <Svg size={14}><path d="M1 1h9v9H1z" fill="#c9d8bf" stroke="#9fb08f" /><circle cx="9" cy="9" r="3" stroke="#8d949f" strokeWidth="1.500" /><path d="M11 11l4 4" stroke="#8d949f" strokeWidth="2" /></Svg>
        </button>
        <NavCaret label="Zoom options" />
    </div>
);

const ViewArea = () => (
    <main className="flex-1 min-w-0 flex flex-col border-x-2 border-[#566073] bg-[#2c3441]">
        <ViewTabs />
        <div className="flex-1 min-h-0 flex">
            <div className="relative flex-1 min-w-0 bg-white">
                <SheetDrawing />
                <NavBar />
            </div>
            <div className="w-3 flex flex-col items-center justify-between py-[2px]">
                <button aria-label="Scroll up"><Svg size={7}><path d="M2 10l6-5 6 5" stroke="#9aa2b0" strokeWidth="2" /></Svg></button>
                <span className="w-[5px] h-3 rounded-sm bg-[#7d8593]" />
                <button aria-label="Scroll down"><Svg size={7}><path d="M2 6l6 5 6-5" stroke="#9aa2b0" strokeWidth="2" /></Svg></button>
            </div>
        </div>
        <div className="h-[11px] flex items-center pl-[2px] pr-3 shrink-0">
            <button aria-label="Temporary hide" className="w-4"><Svg size={9}><path d="M1 10a3 3 0 1 0 6 0a3 3 0 1 0-6 0M9 10a3 3 0 1 0 6 0a3 3 0 1 0-6 0M1 9l3-6M15 9l-3-6" stroke={LIGHT} strokeWidth="1.800" /></Svg></button>
            <button aria-label="Reveal hidden elements" className="w-[14px]"><Svg size={9}><circle cx="8" cy="6" r="5" fill="#8fe3f0" /><path d="M6 10h4v5H6z" fill="#cdd2da" /></Svg></button>
            <button aria-label="Scroll left"><Svg size={7}><path d="M10 2L5 8l5 6" stroke="#9aa2b0" strokeWidth="2" /></Svg></button>
            <span className="flex-1 flex justify-center"><span className="w-[11px] h-[5px] rounded-sm bg-[#7d8593]" /></span>
            <button aria-label="Scroll right"><Svg size={7}><path d="M6 2l5 6-5 6" stroke="#9aa2b0" strokeWidth="2" /></Svg></button>
        </div>
    </main>
);

/* ---------- project browser ---------- */

const treeIcons = {
    view: <><path d="M3 3h10v10H3z" stroke="#c3c9d2" strokeWidth="1.500" /><path d="M0 3h3M13 3h3M0 13h3M13 13h3M3 0v3M13 0v3M3 13v3M13 13v3" stroke="#c3c9d2" strokeWidth="1.300" /></>,
    plan: <><path d="M3 3h10v10H3z" fill={BLUE} stroke={BLUE} /><path d="M0 3h3M13 3h3M0 13h3M13 13h3M3 0v3M13 0v3M3 13v3M13 13v3" stroke="#7ba9cd" strokeWidth="1.500" /></>,
    legend: <><path d="M0 2h16v12H0z" fill={LIGHT} /><path d="M2 5h3v2H2zM2 9h3v2H2zM7 5h3v6H7zM12 5h2v2h-2zM12 9h2v2h-2z" fill="#8a919d" /></>,
    schedule: <path d="M1 2h14v12H1zM1 6h14M1 10h14M5.500 2v12M10.500 2v12" stroke={LIGHT} strokeWidth="1.500" />,
    sheets: <path d="M1 3h5l2 2 2-3 5 6v6H5l-4-4z" fill={LIGHT} />,
    family: <path d="M1 1h6v7H1zM8.500 1H15v8H8.500zM1 9h7v1h7v5H1z" fill={LIGHT} />,
    groups: <><path d="M4 1H1v14h3M12 1h3v14h-3" stroke={LIGHT} strokeWidth="1.500" /><path d="M4 4h4v3h5v6H7v-3H4z" fill={LIGHT} /></>,
    link: <path d="M7 9a3 3 0 0 1 0-4l2-2a3 3 0 0 1 4 4l-2 2M9 7a3 3 0 0 1 0 4l-2 2a3 3 0 0 1-4-4l2-2" stroke="#c08a62" strokeWidth="1.800" transform="rotate(15 8 8)" />,
    bracket: <><path d="M4 1H1v3M12 1h3v3M4 15H1v-3M12 15h3v-3" stroke={LIGHT} strokeWidth="1.500" /><path d="M5 4h7v7H8l-3-3z" fill={LIGHT} /></>,
};

// guides: l = vertical line, b = branch, _ = empty column
const tree = [
    { g: 'l_b-', icon: 'view', name: '06' },
    { g: 'l_b-', icon: 'view', name: '07' },
    { g: 'l_b-', icon: 'view', name: '08' },
    { g: 'l_b-', icon: 'view', name: 'RENDERING' },
    { g: 'l_b-', icon: 'view', name: '{3D}' },
    { g: 'b', t: '−', name: 'Structural' },
    { g: '_b', t: '−', name: 'Structural Plans' },
    { g: '_lb-', icon: 'plan', name: 'MẶT BẰNG THÉP SÀN' },
    { g: '_lb-', icon: 'plan', name: 'MẶT BẰNG ĐỊNH VỊ CỘT' },
    { g: '_b', t: '−', name: '3D Views' },
    { g: '__b-', icon: 'plan', name: '3D PHỐI CẢNH CỘT' },
    { g: '', t: '+', icon: 'legend', name: 'Legends' },
    { g: '', t: '+', icon: 'schedule', name: 'Schedules/Quantities (By Type)' },
    { g: '', t: '−', icon: 'sheets', name: 'Sheets (all)' },
    { g: 'b', t: ' ', name: 'A01 - BÌA BẢN VẼ' },
    { g: 'b', t: ' ', name: 'A02 - KIẾN TRÚC' },
    { g: 'b', t: '+', name: 'A03 - MẶT ĐỨNG TRỤC X5-X1' },
    { g: 'b', t: '+', name: 'A04 - MẶT ĐỨNG TRỤC Y1-Y7' },
    { g: 'b', t: '+', name: 'A05 - MẶT ĐỨNG TRỤC X1-X5' },
    { g: 'b', t: '+', name: 'A06 - MẶT ĐỨNG TRỤC Y7-Y1' },
    { g: 'b', t: '+', name: 'A07 - PHỐI CẢNH 01' },
    { g: 'b', t: '+', name: 'A08 - PHỐI CẢNH 02' },
    { g: 'b', t: '+', name: 'A09 - MẶT BẰNG DIỆN TÍCH SỬ DỤNG' },
    { g: 'b', t: '+', name: 'A10 - MẶT BẰNG CÔNG NĂNG' },
    { g: 'b', t: '+', name: 'A11 - MẶT BẰNG MÁI' },
    { g: 'b', t: '+', name: 'A12 - MẶT CẮT 1-1' },
    { g: 'b', t: '+', name: 'A13 - MẶT CẮT 2-2' },
    { g: 'b', t: '+', name: 'A14 - MẶT CẮT 3-3' },
    { g: 'b', t: '+', name: 'A15 - MẶT CẮT 4-4' },
    { g: 'b', t: '+', name: 'A16 - MẶT CẮT 5-5' },
    { g: 'b', t: ' ', name: 'B01 - KẾT CẤU' },
    { g: 'b', t: '+', name: 'B02 - MẶT BẰNG ĐỊNH VỊ CỘT' },
    { g: 'b', t: '+', name: 'B03 - BẢN VẼ PHỐI CẢNH 3D CỘT' },
    { g: 'b', t: '+', name: 'B04 - CHI TIẾT CỘT' },
    { g: 'b', t: '+', name: 'B05 - MẶT BẰNG BỐ TRÍ THÉP SÀN', active: true },
    { g: '', t: '+', icon: 'family', name: 'Families' },
    { g: '', t: '+', icon: 'groups', name: 'Groups' },
    { g: '', t: ' ', icon: 'link', name: 'Revit Links' },
];

const Guide = ({ kind }) => {
    if (kind === '_') return <span className="w-[10px]" />;
    if (kind === '-') return <span className="w-3 mr-px border-t border-dotted border-[#6b7482]" />;
    return (
        <span className="w-[10px] h-full pl-[5px] flex">
            <span className="flex-1 flex items-center border-l border-dotted border-[#6b7482]">
                {kind === 'b' && <span className="w-full border-t border-dotted border-[#6b7482]" />}
            </span>
        </span>
    );
};

const TreeRow = ({ row }) => (
    <li className={`flex-1 min-h-0 flex items-center whitespace-nowrap ${row.active ? 'bg-[#323a47] font-bold text-white' : ''}`}>
        {row.g.split('').map((k, i) => <Guide key={i} kind={k} />)}
        {row.t && (
            <button aria-label={`Toggle ${row.name}`} className="w-[10px] mr-[3px] flex justify-center">
                {row.t !== ' ' && (
                    <svg width="7" height="7" viewBox="0 0 7 7"><path d={row.t === '+' ? 'M1 3.500h5M3.500 1v5' : 'M1 3.500h5'} stroke="#c3c9d2" /></svg>
                )}
            </button>
        )}
        {row.icon && <span className="w-[13px] flex"><Svg size={11}>{treeIcons[row.icon]}</Svg></span>}
        <a href="#view" className="leading-[12px]">{row.name}</a>
    </li>
);

const browserTools = [['bracket', 'Views'], ['legend', 'Legends'], ['schedule', 'Schedules'], ['sheets', 'Sheets'], ['family', 'Families'], ['groups', 'Groups'], ['link', 'Links']];

const ProjectBrowser = () => (
    <aside className="w-[176px] shrink-0 flex flex-col bg-[#3b4453] text-[7px] text-[#dfe3e8] [font-family:'Noto_Sans',sans-serif]">
        <h2 className="h-3 leading-[12px] bg-[#222933]">Project Browser - 4-5-25</h2>
        <div className="h-[13px] flex items-center bg-[#1b212a]">
            <button aria-label="All items" className="w-[15px] h-full flex items-center justify-center bg-[#3b4453]"><Svg size={10}>{icons.house}</Svg></button>
            {browserTools.map(([icon, label]) => (
                <button key={label} aria-label={label} className="w-[15px] flex justify-center"><Svg size={10}>{treeIcons[icon]}</Svg></button>
            ))}
        </div>
        <label className="mt-[6px] mb-[5px] ml-[6px] h-[15px] flex items-center gap-1 pl-1 bg-[#2c3441]">
            <Svg size={11}><circle cx="7" cy="7" r="5" stroke="#aab1bc" strokeWidth="1.500" /><path d="M11 11l4 4" stroke="#aab1bc" strokeWidth="1.500" /></Svg>
            <input type="search" aria-label="Search project" placeholder="Search" className="w-full bg-transparent outline-none text-[7px] placeholder-[#9aa2ae]" />
        </label>
        <div className="flex-1 min-h-0 flex">
            <ul className="flex-1 min-w-0 flex flex-col overflow-hidden">
                {tree.map((row) => <TreeRow key={row.name} row={row} />)}
            </ul>
            <span className="w-1 bg-[#2c3441]" />
        </div>
    </aside>
);

/* ---------- status bar ---------- */

const StatusBar = () => (
    <footer className="h-3 shrink-0 flex items-center pt-1 pr-10 overflow-hidden bg-[#3b4453] border-t border-[#2c3441] text-[7px] leading-[7px] text-[#dfe3e8]">
        <span className="w-[562px] whitespace-nowrap">Click to select, TAB for alternates, CTRL adds, SHIFT unselects.</span>
        <Svg size={10}><path d="M1 5h8v11H1z" fill="#5fc48c" /><path d="M6 2h9v9H6z" fill={BLUE} /></Svg>
        <span className="flex-1" />
        <span className="flex items-center gap-[6px] mr-[232px] text-[#838b98]">
            <span className="flex items-center mr-3"><Svg size={10}>{icons.brush}</Svg>:0</span>
            <Svg size={10}>{treeIcons.schedule}</Svg>
            <Svg size={10}>{treeIcons.schedule}</Svg>
            <span className="whitespace-nowrap">Main Model</span>
        </span>
        <span className="flex items-center gap-[6px]">
            <Svg size={10}>{treeIcons.link}</Svg>
            <Svg size={10}>{icons.closeHidden}</Svg>
            <Svg size={10}>{icons.pin}</Svg>
            <Svg size={10}>{icons.closeHidden}</Svg>
            <Svg size={10} vb={24}>{big.move}</Svg>
            <Svg size={10}><circle cx="8" cy="8" r="6" stroke={DIM} strokeWidth="2" strokeDasharray="2 2" /></Svg>
            <span className="flex items-center"><Svg size={10}><path d="M1 1h14L10 8v7H6V8z" fill={LIGHT} /></Svg>:0</span>
        </span>
    </footer>
);

const BrandLogo = () => (
    <svg width="120" height="58" viewBox="0 0 120 58" className="absolute top-[9px] right-[5px]" role="img" aria-label="Bản Vẽ Nhà Đẹp">
        <path d="M7 27h31l11-13-1-7 4-4 10 9 18 18v7h29q5 1 5 7t-6 7l-8 2v1H7z" fill="#fff" stroke="#fff" strokeWidth="5" strokeLinejoin="round" />
        <path d="M42.500 48V27L57 12" fill="none" stroke="#22cf9c" strokeWidth="4.500" />
        <path d="M50 5l8 7" stroke="#22cf9c" strokeWidth="6" />
        <path d="M49 48V29L62 17l13 12v19" fill="none" stroke="#3f4246" strokeWidth="4" />
        <path d="M48 46.500h23M71 48V31L62 23" fill="none" stroke="#3f4246" strokeWidth="3" />
        <path d="M54 43V31l7.500-7 7.500 7v12z" fill="#fff" stroke="#3f4246" strokeWidth="1.500" />
        <g fontFamily="Inter, sans-serif">
            <text x="7" y="31" fontSize="7" fontWeight="800" fill="#3f4246">BẢN VẼ</text>
            <text x="7" y="49" fontSize="17" fontWeight="900" fill="#22cf9c">NH</text>
            <text x="80" y="47" fontSize="15" fill="#3f4246" fontWeight="500">ĐẸP</text>
        </g>
        <path d="M7 52.500h94" stroke="#22c79a" />
    </svg>
);

const App = () => (
    <div className="relative h-screen flex flex-col overflow-hidden bg-[#3b4453] text-gray-200 [font-family:'Open_Sans',sans-serif]">
        <TitleBar />
        <RibbonTabs />
        <Ribbon />
        <div className="h-[19px] shrink-0 bg-[#3b4453] border-b border-[#566073]" />
        <div className="flex-1 min-h-0 flex">
            <PropertiesPalette />
            <ViewArea />
            <ProjectBrowser />
        </div>
        <StatusBar />

        <BrandLogo />
        <p className="absolute top-5 left-[212px] right-0 text-center font-bold text-[21px] leading-[26px] text-[#c3c6ca] [font-family:'Liberation_Sans',sans-serif] [text-shadow:1px_1px_1px_#1a1f27] pointer-events-none">BanVeNhaDep.vn</p>
        <p className="absolute bottom-5 inset-x-0 text-center font-bold text-[21px] leading-[26px] text-[#a9acb0] [font-family:'Liberation_Sans',sans-serif] [text-shadow:1px_1px_1px_#555] pointer-events-none">Bản quyền © BanVeNhaDep.vn</p>
    </div>
);

export default App;
